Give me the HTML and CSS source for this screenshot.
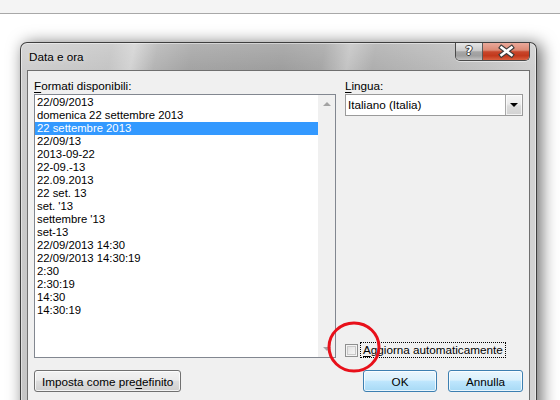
FILE: index.html
```html
<!DOCTYPE html>
<html lang="it">
<head>
<meta charset="utf-8">
<title>Data e ora</title>
<link rel="stylesheet" href="styles.css">
</head>
<body>
<div class="topbar"></div>
<div class="desktop">
  <div class="window">
    <div class="titlebar">
      <span class="title">Data e ora</span>
      <div class="caption-btns">
        <div class="cap help"><span>?</span></div>
        <div class="cap close">
          <svg width="46" height="18" viewBox="0 0 46 18">
            <path d="M18.5 4.5 L28.5 12 M28.5 4.5 L18.5 12" stroke="#3b3b3b" stroke-width="4.8" stroke-linecap="square" fill="none"/>
            <path d="M18.5 4.5 L28.5 12 M28.5 4.5 L18.5 12" stroke="#ffffff" stroke-width="2.6" stroke-linecap="square" fill="none"/>
          </svg>
        </div>
      </div>
    </div>
    <div class="client">
      <div class="cols">
        <div class="col-left">
          <div class="label"><u>F</u>ormati disponibili:</div>
          <div class="listbox">
            <ul class="items">
              <li>22/09/2013</li>
              <li>domenica 22 settembre 2013</li>
              <li class="sel">22 settembre 2013</li>
              <li>22/09/13</li>
              <li>2013-09-22</li>
              <li>22-09.-13</li>
              <li>22.09.2013</li>
              <li>22 set. 13</li>
              <li>set. '13</li>
              <li>settembre '13</li>
              <li>set-13</li>
              <li>22/09/2013 14:30</li>
              <li>22/09/2013 14:30:19</li>
              <li>2:30</li>
              <li>2:30:19</li>
              <li>14:30</li>
              <li>14:30:19</li>
            </ul>
            <div class="vscroll">
              <div class="sbtn"><span class="arr-up"></span></div>
              <div class="sbtn"><span class="arr-down"></span></div>
            </div>
          </div>
        </div>
        <div class="col-right">
          <div class="label"><u>L</u>ingua:</div>
          <div class="combo">
            <span class="combo-text">Italiano (Italia)</span>
            <div class="dropbtn"><span class="drop-arrow"></span></div>
          </div>
          <div class="check-row">
            <span class="checkbox"></span>
            <span class="check-label"><u>A</u>ggiorna automaticamente</span>
            <svg class="annot" width="56" height="54" viewBox="0 0 56 54">
              <ellipse cx="28" cy="27" rx="25" ry="24" fill="none" stroke="#e8101a" stroke-width="3"/>
            </svg>
          </div>
        </div>
      </div>
      <div class="btnrow">
        <button class="btn">Imposta come pre<u>d</u>efinito</button>
        <div class="spacer"></div>
        <button class="btn blue ok">OK</button>
        <button class="btn blue cancel">Annulla</button>
      </div>
    </div>
  </div>
</div>
</body>
</html>
```
FILE: styles.css
```css
* { box-sizing: border-box; }
html, body {
  margin: 0;
  padding: 0;
  width: 560px;
  height: 400px;
  overflow: hidden;
  background: #ffffff;
  font-family: "Liberation Sans", Arial, sans-serif;
  font-size: 11.7px;
  color: #000;
}
u { text-decoration: underline; text-underline-offset: 2px; }

.topbar {
  height: 14px;
  background: #f4f4f4;
  border-bottom: 1px solid #a8a8a8;
}

.desktop {
  padding: 28px 0 0 20px;
}

.window {
  width: 517px;
  height: 400px;
  border: 1px solid #3e3e3e;
  border-bottom: none;
  border-radius: 7px 7px 0 0;
  padding: 0 6px;
  background:
    linear-gradient(to bottom, rgba(255,255,255,0.18), rgba(255,255,255,0) 30px),
    linear-gradient(100deg, #cecece 0px, #c3c3c3 90px, #d2d2d2 112px, #b2b2b2 135px, #a2a2a2 170px, #9c9c9c 260px, #a4a4a4 300px, #c2c2c2 325px, #acacac 350px, #b7b7b7 410px, #c4c4c4 470px, #d2d2d2 517px);
  box-shadow: 4px 2px 16px 1px rgba(0,0,0,0.55), inset 0 0 0 1px rgba(255,255,255,0.45);
}

.titlebar {
  height: 27px;
  display: flex;
  justify-content: space-between;
  align-items: flex-start;
}
.title {
  line-height: 28px;
  padding-left: 2px;
  text-shadow: 0 0 6px rgba(255,255,255,0.6);
}
.caption-btns {
  display: flex;
  border: 1px solid #4a4a4a;
  border-top: none;
  border-radius: 0 0 5px 5px;
  overflow: hidden;
  height: 18px;
  box-shadow: 0 1px 0 rgba(255,255,255,0.5);
}
.cap {
  height: 17px;
  display: flex;
  align-items: center;
  justify-content: center;
}
.help {
  width: 27px;
  border-right: 1px solid #5a5a5a;
  background: linear-gradient(#e6e6e6 0%, #cbcbcb 45%, #a6a6a6 52%, #9f9f9f 75%, #c2c2c2 100%);
}
.help span {
  font-family: "DejaVu Sans", sans-serif;
  font-weight: bold;
  font-size: 12px;
  color: #fff;
  line-height: 17px;
  text-shadow: 1px 0 0 #3a3a3a, -1px 0 0 #3a3a3a, 0 1px 0 #3a3a3a, 0 -1px 0 #3a3a3a;
}
.close {
  width: 46px;
  background: linear-gradient(#eaa99a 0%, #dc8a75 42%, #c8462b 52%, #c2381c 75%, #d9603f 100%);
}
.close svg { display: block; }

.client {
  background: #f0f0f0;
  border: 1px solid #6f6f6f;
  padding: 7px 6px 0 6px;
  height: 340px;
}

.cols {
  display: flex;
  gap: 9px;
}
.col-left {
  width: 302px;
  display: flex;
  flex-direction: column;
}
.col-right {
  width: 178px;
  display: flex;
  flex-direction: column;
}
.label {
  height: 16px;
  line-height: 16px;
}

.listbox {
  height: 264px;
  border: 1px solid #828790;
  background: #fff;
  display: flex;
}
.items {
  list-style: none;
  margin: 0;
  padding: 1px 0 0 0;
  flex: 1;
  font-size: 11.3px;
}
.items li {
  height: 13px;
  line-height: 13px;
  padding-left: 2px;
  white-space: nowrap;
}
.items li.sel {
  background: #3399ff;
  color: #fff;
}
.vscroll {
  width: 17px;
  background: #f0f0f0;
  display: flex;
  flex-direction: column;
  justify-content: space-between;
}
.sbtn {
  height: 17px;
  display: flex;
  align-items: center;
  justify-content: center;
}
.arr-up, .arr-down {
  width: 0;
  height: 0;
  border-left: 4px solid transparent;
  border-right: 4px solid transparent;
}
.arr-up { border-bottom: 4px solid #a3a3a3; }
.arr-down { border-top: 4px solid #a3a3a3; }

.combo {
  height: 22px;
  border: 1px solid #9a9a9a;
  background: #fff;
  display: flex;
  align-items: stretch;
}
.combo-text {
  flex: 1;
  padding-left: 2px;
  line-height: 20px;
}
.dropbtn {
  width: 17px;
  border-left: 1px solid #a8a8a8;
  background: linear-gradient(#f6f6f6 0%, #ececec 45%, #dcdcdc 55%, #d2d2d2 100%);
  box-shadow: inset 0 0 0 1px rgba(255,255,255,0.7);
  display: flex;
  align-items: center;
  justify-content: center;
}
.drop-arrow {
  width: 0;
  height: 0;
  border-left: 4px solid transparent;
  border-right: 4px solid transparent;
  border-top: 4px solid #000;
}

.check-row {
  margin-top: auto;
  position: relative;
  height: 16px;
  display: flex;
  align-items: center;
  gap: 2px;
}
.checkbox {
  width: 13px;
  height: 13px;
  border: 1px solid #8e8f8f;
  background: linear-gradient(135deg, #dcdcdc, #fbfbfb);
  box-shadow: inset 0 0 0 1px #f4f4f4, inset 0 0 0 2px #c9c9c9;
}
.check-label {
  height: 16px;
  line-height: 14px;
  padding: 0 2px;
  border: 1px dotted #000;
  white-space: nowrap;
}
.annot {
  position: absolute;
  left: -19px;
  top: -22px;
  pointer-events: none;
}

.btnrow {
  margin-top: 12px;
  display: flex;
  gap: 11px;
}
.spacer { flex: 1; }
.btn {
  height: 22px;
  font-family: inherit;
  font-size: 11.7px;
  color: #000;
  border: 1px solid #707070;
  border-radius: 3px;
  padding: 0 7px;
  background: linear-gradient(#f2f2f2 0%, #ebebeb 45%, #dddddd 52%, #cfcfcf 100%);
  box-shadow: inset 0 0 0 1px rgba(255,255,255,0.75);
}
.btn.blue {
  border-color: #3c7fb1;
  background: linear-gradient(#eaf6fd 0%, #d9f0fc 45%, #bee6fd 52%, #a7d9f5 100%);
}
.btn.ok { width: 74px; }
.btn.cancel { width: 75px; }
```
